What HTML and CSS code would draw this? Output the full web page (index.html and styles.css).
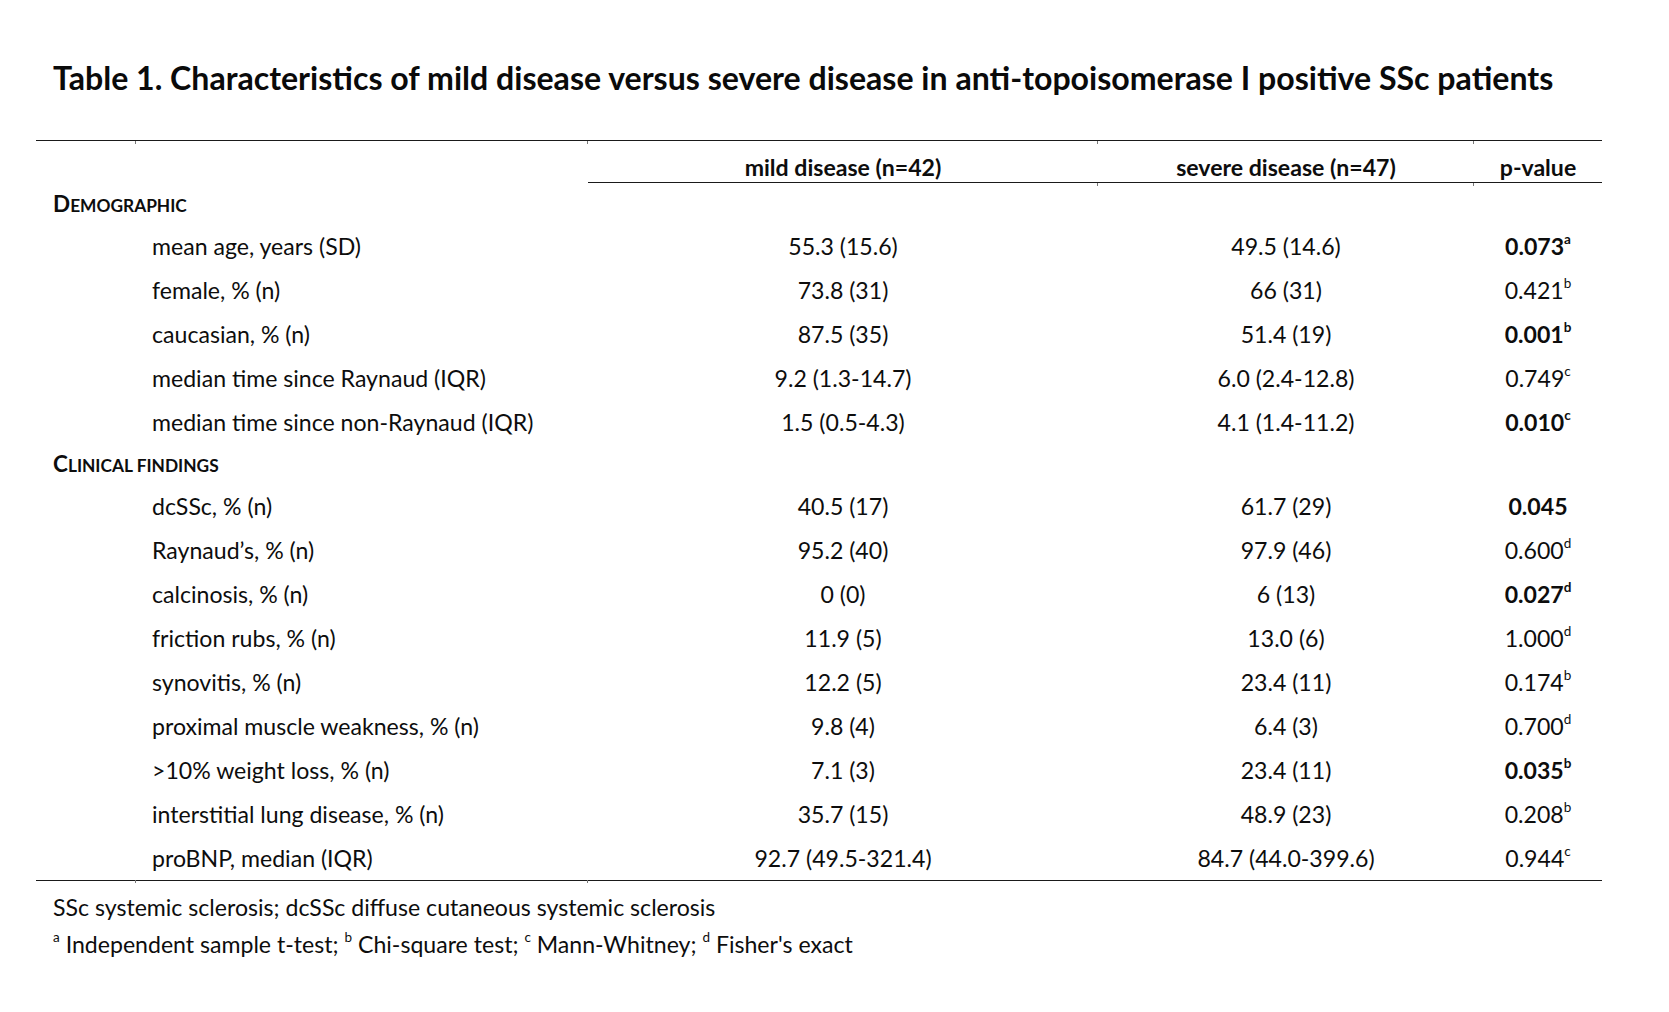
FILE: index.html
```html
<!DOCTYPE html>
<html lang="en">
<head>
<meta charset="utf-8">
<title>Table 1</title>
<link rel="stylesheet" href="styles.css">
</head>
<body>
<div class="page">
  <h1 class="title">Table 1. Characteristics of mild disease versus severe disease in anti-topoisomerase I positive SSc patients</h1>
  <table class="data">
    <colgroup>
      <col class="w-sec"><col class="w-label"><col class="w-mild"><col class="w-severe"><col class="w-p">
    </colgroup>
    <thead>
      <tr class="head">
        <th></th>
        <th class="tk-top"></th>
        <th class="hd ul tk-top">mild disease (n=42)</th>
        <th class="hd ul tk-top tk-bot">severe disease (n=47)</th>
        <th class="hd ul tk-top tk-bot">p-value</th>
      </tr>
    </thead>
    <tbody>
      <tr class="section first"><td colspan="2" class="sec">D<span class="sc">emographic</span></td><td></td><td></td><td></td></tr>
      <tr class="row"><td></td><td class="label">mean age, years (SD)</td><td class="num">55.3 (15.6)</td><td class="num">49.5 (14.6)</td><td class="num"><b>0.073<sup>a</sup></b></td></tr>
      <tr class="row"><td></td><td class="label">female, % (n)</td><td class="num">73.8 (31)</td><td class="num">66 (31)</td><td class="num">0.421<sup>b</sup></td></tr>
      <tr class="row"><td></td><td class="label">caucasian, % (n)</td><td class="num">87.5 (35)</td><td class="num">51.4 (19)</td><td class="num"><b>0.001<sup>b</sup></b></td></tr>
      <tr class="row"><td></td><td class="label">median time since Raynaud (IQR)</td><td class="num">9.2 (1.3-14.7)</td><td class="num">6.0 (2.4-12.8)</td><td class="num">0.749<sup>c</sup></td></tr>
      <tr class="row"><td></td><td class="label">median time since non-Raynaud (IQR)</td><td class="num">1.5 (0.5-4.3)</td><td class="num">4.1 (1.4-11.2)</td><td class="num"><b>0.010<sup>c</sup></b></td></tr>
      <tr class="section second"><td colspan="2" class="sec">C<span class="sc">linical findings</span></td><td></td><td></td><td></td></tr>
      <tr class="row"><td></td><td class="label">dcSSc, % (n)</td><td class="num">40.5 (17)</td><td class="num">61.7 (29)</td><td class="num"><b>0.045</b></td></tr>
      <tr class="row"><td></td><td class="label">Raynaud’s, % (n)</td><td class="num">95.2 (40)</td><td class="num">97.9 (46)</td><td class="num">0.600<sup>d</sup></td></tr>
      <tr class="row"><td></td><td class="label">calcinosis, % (n)</td><td class="num">0 (0)</td><td class="num">6 (13)</td><td class="num"><b>0.027<sup>d</sup></b></td></tr>
      <tr class="row"><td></td><td class="label">friction rubs, % (n)</td><td class="num">11.9 (5)</td><td class="num">13.0 (6)</td><td class="num">1.000<sup>d</sup></td></tr>
      <tr class="row"><td></td><td class="label">synovitis, % (n)</td><td class="num">12.2 (5)</td><td class="num">23.4 (11)</td><td class="num">0.174<sup>b</sup></td></tr>
      <tr class="row"><td></td><td class="label">proximal muscle weakness, % (n)</td><td class="num">9.8 (4)</td><td class="num">6.4 (3)</td><td class="num">0.700<sup>d</sup></td></tr>
      <tr class="row"><td></td><td class="label">&gt;10% weight loss, % (n)</td><td class="num">7.1 (3)</td><td class="num">23.4 (11)</td><td class="num"><b>0.035<sup>b</sup></b></td></tr>
      <tr class="row"><td></td><td class="label">interstitial lung disease, % (n)</td><td class="num">35.7 (15)</td><td class="num">48.9 (23)</td><td class="num">0.208<sup>b</sup></td></tr>
      <tr class="row last"><td></td><td class="label tk-end">proBNP, median (IQR)</td><td class="num tk-end">92.7 (49.5-321.4)</td><td class="num">84.7 (44.0-399.6)</td><td class="num">0.944<sup>c</sup></td></tr>
    </tbody>
  </table>
  <div class="notes">
    <p>SSc systemic sclerosis; dcSSc diffuse cutaneous systemic sclerosis</p>
    <p><sup>a</sup> Independent sample t-test; <sup>b</sup> Chi-square test; <sup>c</sup> Mann-Whitney; <sup>d</sup> Fisher's exact</p>
  </div>
</div>
</body>
</html>
```
FILE: styles.css
```css
html, body {
  margin: 0;
  padding: 0;
  background: #ffffff;
}

body {
  font-family: Lato, "Open Sans", "Liberation Sans", sans-serif;
  color: #0d0d0d;
  font-size: 23.1px;
}

.page {
  padding: 0 0 0 36px;
}

.title {
  margin: 58px 0 0 17px;
  font-size: 32.1px;
  line-height: 40px;
  font-weight: 700;
  color: #0a0a0a;
  white-space: nowrap;
}

.data {
  margin-top: 42px;
  width: 1566px;
  table-layout: fixed;
  border-collapse: collapse;
  border-spacing: 0;
  border-top: 1px solid #1a1a1a;
}

.w-sec { width: 100px; }
.w-label { width: 452px; }
.w-mild { width: 510px; }
.w-severe { width: 376px; }
.w-p { width: 128px; }

.data th,
.data td {
  padding: 0;
  line-height: 24px;
  vertical-align: middle;
  position: relative;
  white-space: nowrap;
}

.head th {
  padding: 14px 0 3px;
  font-weight: 700;
  text-align: center;
}

.head th.ul {
  border-bottom: 1px solid #1a1a1a;
}

.section td {
  height: 41px;
}

.section.first .sec {
  height: 38px;
  padding-top: 3px;
}

.section.second td {
  height: 40px;
}

.section.second .sec {
  height: 39px;
  padding-top: 1px;
}

.sec {
  padding-left: 17px !important;
  font-weight: 700;
  font-size: 22.5px;
}

.sec .sc {
  text-transform: uppercase;
  font-size: 0.77em;
}

.row td {
  height: 44px;
}

.row.last td {
  border-bottom: 1px solid #1a1a1a;
}

.label {
  padding-left: 16px !important;
}

.num {
  text-align: center;
}

b {
  font-weight: 700;
}

sup {
  font-size: 13.5px;
  line-height: 0;
  vertical-align: 11px;
}

/* tiny Word cell-border ticks on the rules */
.tk-top::before,
.tk-bot::after,
.tk-end::after {
  content: "";
  position: absolute;
  left: -1px;
  width: 1px;
  height: 3px;
  background: #777777;
}

.tk-top::before {
  top: 0;
}

.tk-bot::after {
  bottom: -4px;
}

.tk-end::after {
  bottom: -3px;
}

.notes {
  margin: 8px 0 0 17px;
}

.notes p {
  margin: 0;
  line-height: 37px;
  white-space: nowrap;
}
```
